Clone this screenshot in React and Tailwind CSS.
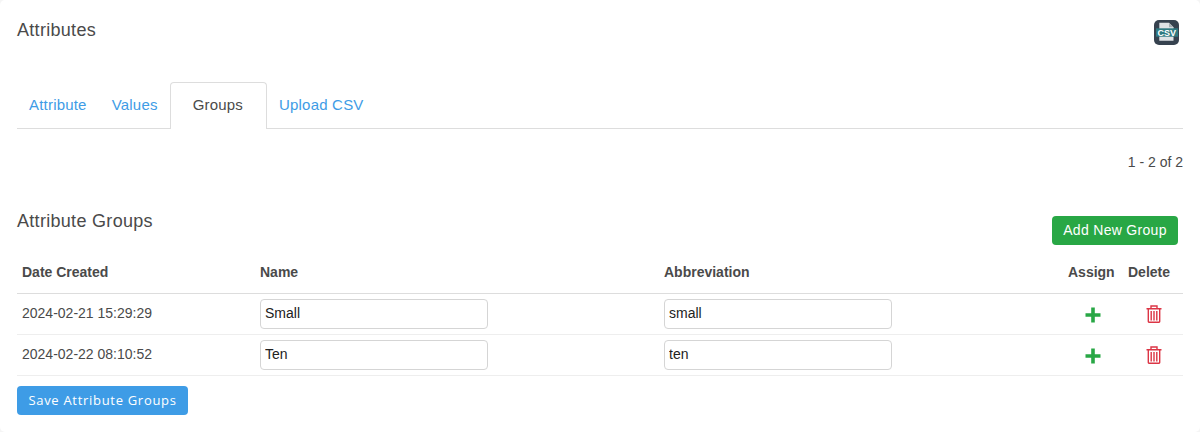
const Row = ({ date, name, abbr }) => (
  <div className="flex h-[41px] items-center border-b border-[#eeeeee] text-[14px]">
    <div className="w-[243px] pb-[2px] pl-[5px] text-[#4a4a4a]">{date}</div>
    <div className="w-[404px]">
      <input readOnly value={name} className="block h-[30px] w-[228px] rounded-[4px] border border-[#d5d5d5] bg-white px-[4px] pb-[2px] text-[14px] text-[#222222]" />
    </div>
    <div className="w-[404px]">
      <input readOnly value={abbr} className="block h-[30px] w-[228px] rounded-[4px] border border-[#d5d5d5] bg-white px-[4px] pb-[2px] text-[14px] text-[#222222]" />
    </div>
    <div className="flex w-[60px] justify-center pr-[10px] pt-[2px]">
      <svg width="16" height="16" viewBox="0 0 16 16"><path d="M6.200 0.500h3.600v5.700h5.700v3.600H9.800v5.700H6.200V9.800H0.500V6.200h5.700z" fill="#28a745" /></svg>
    </div>
    <div className="flex w-[55px] justify-center pr-[4px]">
      <svg width="16" height="18" viewBox="0 0 16 18" fill="none" stroke="#dc3545" strokeWidth="1.400">
        <path d="M0.500 3.700h15M5 3.500V1h6v2.500M2.300 4v12.600a.7 .7 0 0 0 .7 .7h10a.7 .7 0 0 0 .7-.7V4M5.200 6v9.500M8 6v9.500M10.800 6v9.500" />
      </svg>
    </div>
  </div>
);

export default function App() {
  return (
    <div className="h-[432px] w-[1200px] overflow-hidden bg-[#f5f5f5] font-['Liberation_Sans',Arial,sans-serif]">
      <div className="h-[432px] rounded-[5px] bg-white px-[17px] text-[#4a4a4a]">
        <div className="flex items-start justify-between pt-[20px]">
          <h1 className="text-[18px] leading-[20px] tracking-[0.3px]">Attributes</h1>
          <svg width="25" height="25" viewBox="0 0 25 25" className="mr-[4px]">
            <rect width="25" height="25" rx="5" fill="#36424f" />
            <path d="M5.300 2.700h9.700l4.500 4.500V20.700H5.300z" fill="#dfe3e6" />
            <path d="M15 2.700l4.500 4.500H15z" fill="#a5adb3" />
            <rect x="2" y="8.300" width="22" height="8.400" fill="#2f7a82" />
            <text x="12.800" y="15.800" textAnchor="middle" fontSize="9" fontWeight="700" fill="#ffffff" fontFamily="Liberation Sans">CSV</text>
          </svg>
        </div>

        <div className="mt-[37px] flex h-[47px] items-stretch border-b border-[#dddddd] text-[15px] tracking-[0.2px]">
          <a className="px-[12px] pt-[12px] text-[#3e9ce6]">Attribute</a>
          <a className="ml-[1px] px-[12px] pt-[12px] text-[#3e9ce6]">Values</a>
          <a className="mb-[-1px] rounded-t-[4px] border border-b-0 border-[#dddddd] bg-white pl-[22px] pr-[23px] pt-[11px]">Groups</a>
          <a className="px-[12px] pt-[12px] text-[#3e9ce6]">Upload CSV</a>
        </div>

        <div className="mt-[25px] text-right text-[14px] leading-[16px]">1 - 2 of 2</div>

        <div className="mt-[38px] flex items-start justify-between">
          <h2 className="mt-[3px] text-[18px] leading-[20px] tracking-[0.3px]">Attribute Groups</h2>
          <button className="mr-[5px] mt-[8px] h-[29px] w-[126px] rounded-[4px] bg-[#28a745] pb-[1px] text-[14px] tracking-[0.3px] text-white">Add New Group</button>
        </div>

        <div className="mt-[8px] flex h-[41px] items-center border-b border-[#dddddd] pb-[2px] text-[14px] font-bold">
          <div className="w-[243px] pl-[5px]">Date Created</div>
          <div className="w-[404px]">Name</div>
          <div className="w-[404px]">Abbreviation</div>
          <div className="w-[60px]">Assign</div>
          <div className="w-[55px]">Delete</div>
        </div>

        <Row date="2024-02-21 15:29:29" name="Small" abbr="small" />
        <Row date="2024-02-22 08:10:52" name="Ten" abbr="ten" />

        <button className="mt-[10px] h-[29px] w-[171px] rounded-[4px] bg-[#3e9ce6] font-['Open_Sans',sans-serif] text-[13px] tracking-[0.7px] text-white">Save Attribute Groups</button>
      </div>
    </div>
  );
}
